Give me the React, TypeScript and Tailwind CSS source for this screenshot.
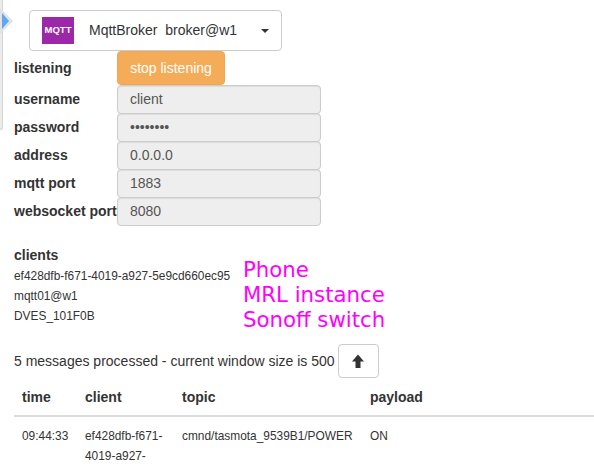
import { useState } from "react";

const fields = [
  { label: "username", value: "client" },
  { label: "password", value: "••••••••" },
  { label: "address", value: "0.0.0.0" },
  { label: "mqtt port", value: "1883" },
  { label: "websocket port", value: "8080" },
];

const clients = ["ef428dfb-f671-4019-a927-5e9cd660ec95", "mqtt01@w1", "DVES_101F0B"];

function SideTab() {
  return (
    <div className="absolute left-0 top-0 h-[130px] w-[3px] rounded-br-[3px] border-r border-b border-[#d4d4d4] bg-[#ececec]">
      <svg className="absolute left-0 top-[8px]" width="14" height="26" viewBox="0 0 14 26">
        <path d="M0 0 L13 13 L0 26 Z" fill="#e2e2e2" />
        <path d="M2 5 L9 13 L2 21 Z" fill="#5aa9f2" />
      </svg>
    </div>
  );
}

function FieldRow({ label, value }: { label: string; value: string }) {
  return (
    <div className="flex h-[28px] items-center">
      <label className="w-[103px] shrink-0 whitespace-nowrap text-[14px] font-bold text-[#333333]">{label}</label>
      <input
        readOnly
        value={value}
        className="h-[29px] w-[204px] rounded-[4px] border border-[#cccccc] bg-[#eeeeee] px-3 text-[14px] text-[#555555] shadow-[inset_0_1px_1px_rgba(0,0,0,0.075)] outline-none"
      />
    </div>
  );
}

export default function App() {
  const [listening] = useState(true);

  return (
    <div className="relative h-[466px] w-[594px] overflow-hidden bg-white font-['Liberation_Sans',Arial,sans-serif] text-[14px] text-[#333333]">
      <SideTab />

      <div className="pl-[14px]">
        {/* Service selector */}
        <div className="ml-[15px] mt-[10px] flex h-[41px] w-[253px] items-center rounded-[4px] border border-[#cccccc] bg-white pl-[12px]">
          <div className="flex h-[27px] w-[32px] items-center justify-center bg-[#9c27a8] text-[9.5px] font-bold text-white">
            MQTT
          </div>
          <span className="ml-[15px] whitespace-pre text-[14px]">MqttBroker&nbsp; broker@w1</span>
          <span className="ml-[24px] h-0 w-0 border-x-[4px] border-t-[4px] border-x-transparent border-t-[#333333]" />
        </div>

        {/* Config form */}
        <div className="flex h-[34px] items-center">
          <label className="w-[103px] text-[14px] font-bold">listening</label>
          <button className="h-[34px] w-[108px] rounded-[4px] border border-[#f3a64f] bg-[#f5ac58] text-[14px] text-white">
            {listening ? "stop listening" : "start listening"}
          </button>
        </div>
        {fields.map((f) => (
          <FieldRow key={f.label} label={f.label} value={f.value} />
        ))}

        {/* Clients */}
        <div className="mt-[20px] flex">
          <div className="w-[229px] shrink-0">
            <div className="text-[14px] font-bold leading-[20px]">clients</div>
            <div className="mt-[1px] text-[11.9px] leading-[20px]">
              {clients.map((c) => (
                <div key={c}>{c}</div>
              ))}
            </div>
          </div>
          <div className="mt-[12px] font-['DejaVu_Sans',sans-serif] text-[21.25px] leading-[25px] text-[#ff00ff]">
            <div>Phone</div>
            <div>MRL instance</div>
            <div>Sonoff switch</div>
          </div>
        </div>

        {/* Message window */}
        <div className="mt-[12px] flex items-center">
          <span className="text-[14px]">5 messages processed - current window size is 500</span>
          <button className="ml-[3px] flex h-[34px] w-[41px] items-center justify-center rounded-[4px] border border-[#cccccc] bg-white">
            <svg width="12" height="14" viewBox="0 0 12 14">
              <path d="M6 0.5 L12 7.5 H8.5 V14 H3.5 V7.5 H0 Z" fill="#333333" />
            </svg>
          </button>
        </div>

        <table className="mt-[1px] w-[580px] table-fixed border-collapse text-left">
          <thead>
            <tr className="border-b-2 border-[#dddddd]">
              <th className="h-[37px] w-[63px] pl-[8px] text-[14px] font-bold">time</th>
              <th className="w-[97px] pl-[8px] text-[14px] font-bold">client</th>
              <th className="w-[188px] pl-[8px] text-[14px] font-bold">topic</th>
              <th className="pl-[8px] text-[14px] font-bold">payload</th>
            </tr>
          </thead>
          <tbody className="text-[11.9px] leading-[20px]">
            <tr>
              <td className="pl-[8px] pt-[9px] align-top whitespace-nowrap">09:44:33</td>
              <td className="pl-[8px] pt-[9px] align-top">ef428dfb-f671-4019-a927-</td>
              <td className="pl-[8px] pt-[9px] align-top whitespace-nowrap">cmnd/tasmota_9539B1/POWER</td>
              <td className="pl-[8px] pt-[9px] align-top">ON</td>
            </tr>
          </tbody>
        </table>
      </div>
    </div>
  );
}
